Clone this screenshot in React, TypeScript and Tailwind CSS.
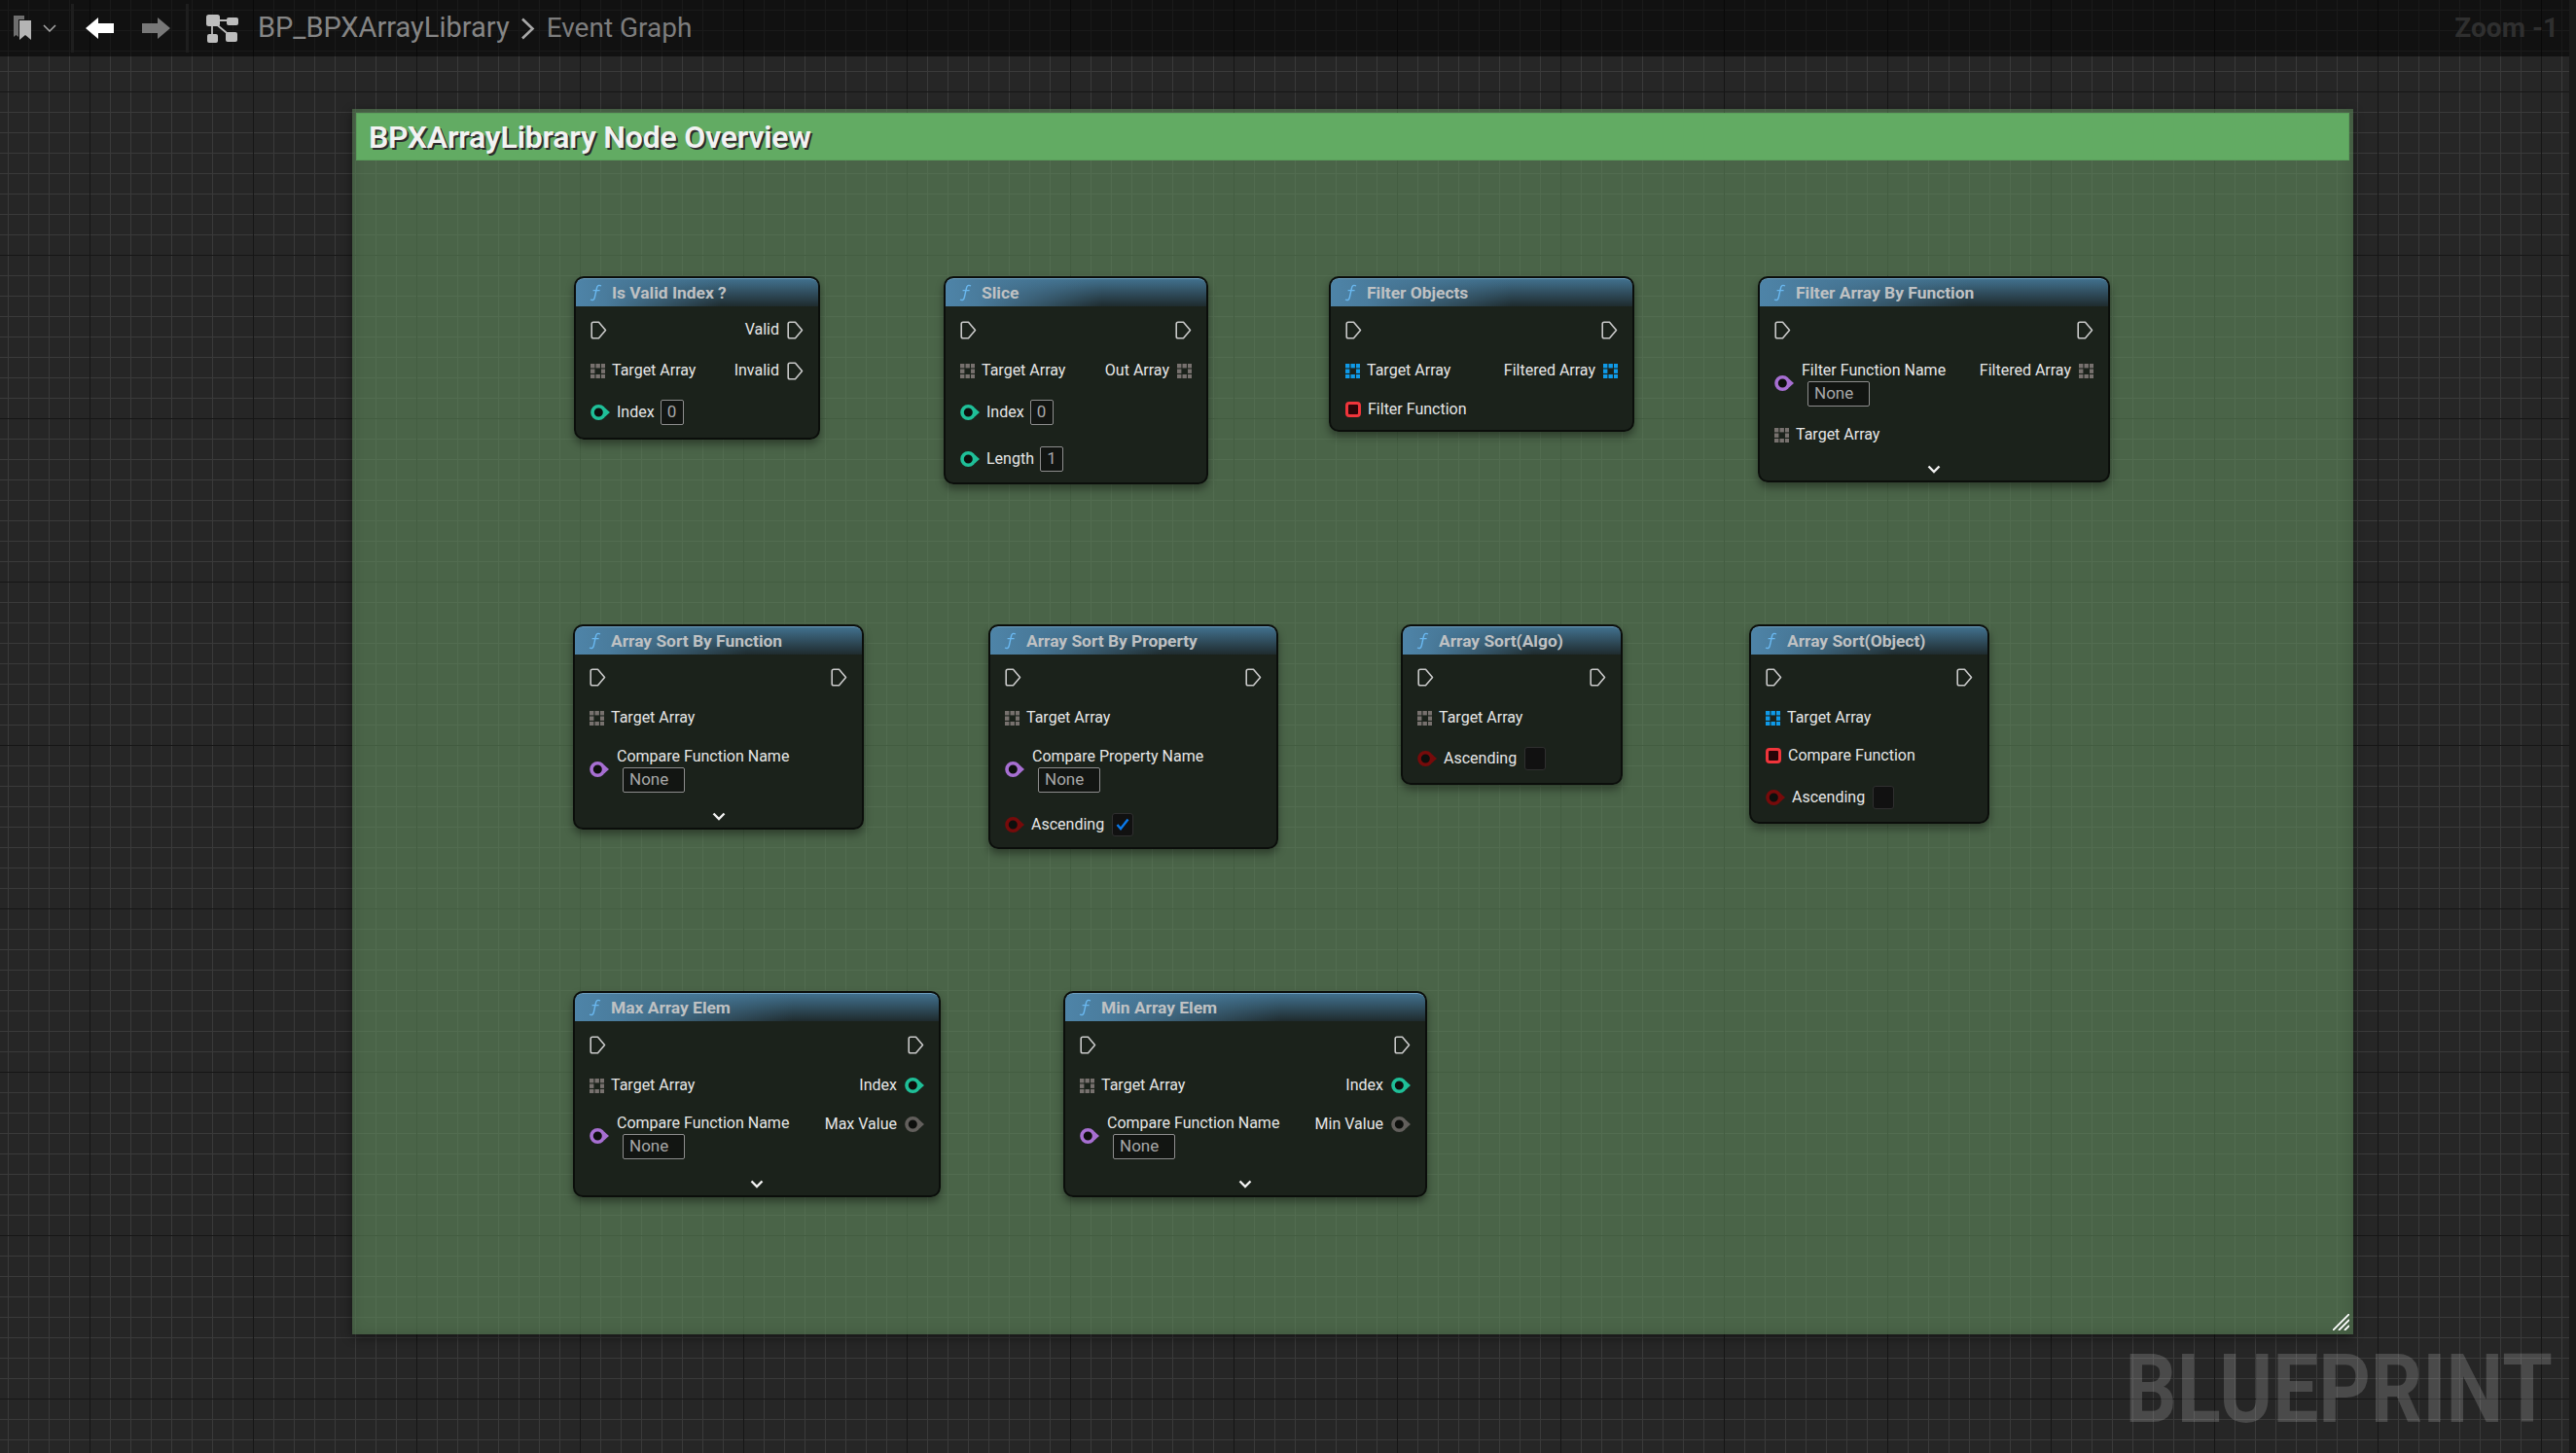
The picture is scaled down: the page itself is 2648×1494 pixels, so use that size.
import type { ReactNode } from 'react';

type PinKind = 'exec' | 'array' | 'objects' | 'delegate' | 'int' | 'name' | 'bool' | 'wild';

function ExecPin() {
  return (
    <svg width="17" height="19" viewBox="0 0 17 19" fill="none" className="shrink-0">
      <path d="M3 1.2H8.5L15.5 9.5L8.5 17.8H3Q1.2 17.8 1.2 16V3Q1.2 1.2 3 1.2Z" stroke="#c9c9c9" strokeWidth="1.6" strokeLinejoin="round" />
    </svg>
  );
}

function ArrayPin({ color }: { color: string }) {
  const cells = [0, 5.5, 11];
  return (
    <svg width="15" height="15" viewBox="0 0 15 15" className="shrink-0">
      {cells.map((y) =>
        cells.map((x) =>
          x === 5.5 && y === 5.5 ? null : <rect key={`${x}-${y}`} x={x} y={y} width="4.4" height="4.4" fill={color} />,
        ),
      )}
    </svg>
  );
}

function CirclePin({ color }: { color: string }) {
  return (
    <svg width="20" height="18" viewBox="0 0 20 18" className="shrink-0">
      <path d="M15 4.5L20 9L15 13.5Z" fill={color} />
      <circle cx="8.3" cy="9" r="6.3" fill="#0d0f0d" stroke={color} strokeWidth="3.6" />
    </svg>
  );
}

function DelegatePin() {
  return (
    <svg width="16" height="16" viewBox="0 0 16 16" className="shrink-0">
      <rect x="1.5" y="1.5" width="13" height="13" rx="2.5" fill="#2a0508" stroke="#f0353b" strokeWidth="3" />
    </svg>
  );
}

function Pin({ kind }: { kind: PinKind }) {
  if (kind === 'exec') return <ExecPin />;
  if (kind === 'array') return <ArrayPin color="#77716e" />;
  if (kind === 'objects') return <ArrayPin color="#0f9ae8" />;
  if (kind === 'delegate') return <DelegatePin />;
  if (kind === 'int') return <CirclePin color="#1fbf98" />;
  if (kind === 'name') return <CirclePin color="#a76fd2" />;
  if (kind === 'bool') return <CirclePin color="#760b0b" />;
  return <CirclePin color="#625f5c" />;
}

function InPin({ kind, label, h, children }: { kind: PinKind; label?: string; h: string; children?: ReactNode }) {
  return (
    <div className={`flex items-center ${h}`}>
      <Pin kind={kind} />
      {label && <span className="ml-[7px] text-[16px] leading-[20px] whitespace-nowrap text-[#e6e6e6]">{label}</span>}
      {children}
    </div>
  );
}

function OutPin({ kind, label, h }: { kind: PinKind; label?: string; h: string }) {
  return (
    <div className={`flex items-center justify-end ${h}`}>
      {label && <span className="mr-[8px] text-[16px] leading-[20px] whitespace-nowrap text-[#e6e6e6]">{label}</span>}
      <Pin kind={kind} />
    </div>
  );
}

function NumberBox({ value }: { value: string }) {
  return (
    <div className="ml-[6px] flex h-[26px] w-[24px] items-center justify-center rounded-[2px] border border-[#8d8d8d] bg-[#121512] text-[17px] text-[#a8a8a8]">
      {value}
    </div>
  );
}

function CheckBox({ checked }: { checked?: boolean }) {
  return (
    <div className="ml-[8px] flex h-[24px] w-[22px] items-center justify-center rounded-[3px] border border-[#2f2f2f] bg-[#111111]">
      {checked && (
        <svg width="14" height="13" viewBox="0 0 14 13" fill="none">
          <path d="M1.5 7L5 11L12.5 1.5" stroke="#0a78e8" strokeWidth="2.4" />
        </svg>
      )}
    </div>
  );
}

function NamePin({ label, h }: { label: string; h: string }) {
  return (
    <div className={`flex items-center ${h}`}>
      <Pin kind="name" />
      <div className="ml-[8px] flex flex-col">
        <span className="text-[16px] leading-[20px] whitespace-nowrap text-[#e6e6e6]">{label}</span>
        <div className="ml-[6px] mt-[1px] flex h-[26px] w-[64px] items-center rounded-[2px] border border-[#8d8d8d] bg-[#121512] pl-[6px] text-[17px] text-[#a8a8a8]">
          None
        </div>
      </div>
    </div>
  );
}

function Chevron() {
  return (
    <div className="flex h-[24px] shrink-0 items-center justify-center">
      <svg width="14" height="9" viewBox="0 0 14 9" fill="none">
        <path d="M1.5 1.5L7 7L12.5 1.5" stroke="#f2f2f2" strokeWidth="2.4" />
      </svg>
    </div>
  );
}

function FuncNode({ title, box, left, right, more }: { title: string; box: string; left: ReactNode; right: ReactNode; more?: boolean }) {
  return (
    <div className={`absolute flex flex-col overflow-hidden rounded-[10px] border-2 border-[#0b0e0b] bg-[#1a201a]/97 shadow-[0_5px_9px_rgba(0,0,0,0.38)] ${box}`}>
      <div className="flex h-[29px] shrink-0 items-center rounded-t-[8px] border-t border-[#6d9dbd] bg-[linear-gradient(to_right,#4e84a8_0%,#4a7c9d_12%,rgba(74,124,157,0)_60%),linear-gradient(to_bottom,#41708d_0%,#1f2b2e_100%)] pl-[14px]">
        <svg width="14" height="18" viewBox="0 0 14 18" fill="none" className="shrink-0">
          <path d="M12 2C9.5 0.6 8 1.5 7.4 4.5L5.4 13.5C4.8 16.4 3.2 17.2 1 16M3.6 6.6H10.6" stroke="#69b7ef" strokeWidth="1.4" />
        </svg>
        <span className="ml-[9px] text-[17.4px] font-bold whitespace-nowrap text-[#bfc1c3]">{title}</span>
      </div>
      <div className="flex flex-1 justify-between px-[15px]">
        <div className="flex flex-col">{left}</div>
        <div className="flex flex-col">{right}</div>
      </div>
      {more && <Chevron />}
    </div>
  );
}

function Toolbar() {
  return (
    <div className="relative flex h-[58px] items-center bg-black/55">
      <svg width="20" height="26" viewBox="0 0 20 26" className="ml-[14px] shrink-0">
        <path d="M0 0H11V4H5V22L2.5 20L0 22Z" fill="#6e6e6e" />
        <path d="M6 5H18V25L12 20L6 25Z" fill="#b4b4b4" />
      </svg>
      <svg width="14" height="8" viewBox="0 0 14 8" fill="none" className="ml-[10px] shrink-0">
        <path d="M1 1L7 7L13 1" stroke="#a8a8a8" strokeWidth="1.5" />
      </svg>
      <div className="ml-[15px] h-[50px] w-[3px] shrink-0 bg-[#1e1e1e]" />
      <svg width="29" height="22" viewBox="0 0 29 22" className="ml-[12px] shrink-0">
        <path d="M0 11L13 0V6H29V16H13V22Z" fill="#ffffff" />
      </svg>
      <svg width="29" height="22" viewBox="0 0 29 22" className="ml-[29px] shrink-0">
        <path d="M29 11L16 0V6H0V16H16V22Z" fill="#787878" />
      </svg>
      <div className="ml-[16px] h-[50px] w-[3px] shrink-0 bg-[#1e1e1e]" />
      <svg width="33" height="29" viewBox="0 0 33 29" className="ml-[18px] shrink-0" fill="none">
        <path d="M8 6H26M6 8V24M8 8L26 23" stroke="#b9b9b9" strokeWidth="1.8" />
        <rect x="0" y="0" width="14" height="12" rx="2.5" fill="#bdbdbd" />
        <rect x="21" y="3" width="12" height="8" rx="2" fill="#bdbdbd" />
        <rect x="1" y="20" width="11" height="9" rx="2" fill="#bdbdbd" />
        <rect x="20" y="18" width="12" height="10" rx="2" fill="#bdbdbd" />
      </svg>
      <span className="ml-[20px] text-[29px] whitespace-nowrap text-[#858585]">BP_BPXArrayLibrary</span>
      <svg width="15" height="23" viewBox="0 0 15 23" fill="none" className="ml-[11px] shrink-0">
        <path d="M2 1.5L12.5 11.5L2 21.5" stroke="#a8a8a8" strokeWidth="2.6" />
      </svg>
      <span className="ml-[12px] text-[28px] whitespace-nowrap text-[#7d7d7d]">Event Graph</span>
      <span className="ml-auto mr-[11px] text-[28px] font-bold whitespace-nowrap text-[#2f2f2f]">Zoom -1</span>
    </div>
  );
}

export default function App() {
  return (
    <div className="flex h-[1494px] w-[2648px] overflow-hidden bg-[#1a1a1a] [font-family:Roboto,sans-serif]">
      <div className="relative w-[2641px] shrink-0 bg-[#262626] bg-[linear-gradient(to_right,#161616_1px,transparent_1px),linear-gradient(to_bottom,#161616_1px,transparent_1px),linear-gradient(to_right,#3a3a3a_1px,transparent_1px),linear-gradient(to_bottom,#3a3a3a_1px,transparent_1px)] bg-[size:168px_168px,168px_168px,21px_21px,21px_21px] bg-[position:92px_94px,92px_94px,8px_10px,8px_10px]">
        <Toolbar />

        {/* comment box */}
        <div className="absolute left-[362px] top-[112px] h-[1260px] w-[2057px] bg-[rgba(98,141,95,0.6)] shadow-[0_3px_10px_rgba(0,0,0,0.45),inset_0_0_14px_rgba(0,0,0,0.14)]">
          <div className="m-[4px] flex h-[49px] items-center border border-[#5a9f5b] bg-[#62ab63] pl-[12px]">
            <span className="text-[32px] font-semibold tracking-[-0.2px] whitespace-nowrap text-[#f2f2f2] [text-shadow:2px_2px_0_#2c2c2c]">
              BPXArrayLibrary Node Overview
            </span>
          </div>
          <svg width="17" height="17" viewBox="0 0 17 17" className="absolute bottom-[4px] right-[4px]" stroke="#ffffff" strokeWidth="1.8">
            <path d="M0 17L17 0M6 17L17 6M12 17L17 12" />
          </svg>
        </div>

        <FuncNode
          title="Is Valid Index ?"
          box="left-[590px] top-[284px] h-[168px] w-[253px]"
          left={<>
            <InPin kind="exec" h="h-[48px]" />
            <InPin kind="array" label="Target Array" h="h-[36px]" />
            <InPin kind="int" label="Index" h="h-[50px]"><NumberBox value="0" /></InPin>
          </>}
          right={<>
            <OutPin kind="exec" label="Valid" h="h-[48px]" />
            <OutPin kind="exec" label="Invalid" h="h-[36px]" />
          </>}
        />
        <FuncNode
          title="Slice"
          box="left-[970px] top-[284px] h-[214px] w-[272px]"
          left={<>
            <InPin kind="exec" h="h-[48px]" />
            <InPin kind="array" label="Target Array" h="h-[36px]" />
            <InPin kind="int" label="Index" h="h-[50px]"><NumberBox value="0" /></InPin>
            <InPin kind="int" label="Length" h="h-[46px]"><NumberBox value="1" /></InPin>
          </>}
          right={<>
            <OutPin kind="exec" h="h-[48px]" />
            <OutPin kind="array" label="Out Array" h="h-[36px]" />
          </>}
        />
        <FuncNode
          title="Filter Objects"
          box="left-[1366px] top-[284px] h-[160px] w-[314px]"
          left={<>
            <InPin kind="exec" h="h-[48px]" />
            <InPin kind="objects" label="Target Array" h="h-[36px]" />
            <InPin kind="delegate" label="Filter Function" h="h-[44px]" />
          </>}
          right={<>
            <OutPin kind="exec" h="h-[48px]" />
            <OutPin kind="objects" label="Filtered Array" h="h-[36px]" />
          </>}
        />
        <FuncNode
          more
          title="Filter Array By Function"
          box="left-[1807px] top-[284px] h-[212px] w-[362px]"
          left={<>
            <InPin kind="exec" h="h-[48px]" />
            <NamePin label="Filter Function Name" h="h-[62px]" />
            <InPin kind="array" label="Target Array" h="h-[44px]" />
          </>}
          right={<>
            <OutPin kind="exec" h="h-[48px]" />
            <OutPin kind="array" label="Filtered Array" h="h-[36px]" />
          </>}
        />

        <FuncNode
          more
          title="Array Sort By Function"
          box="left-[589px] top-[642px] h-[211px] w-[299px]"
          left={<>
            <InPin kind="exec" h="h-[47px]" />
            <InPin kind="array" label="Target Array" h="h-[36px]" />
            <NamePin label="Compare Function Name" h="h-[70px]" />
          </>}
          right={<OutPin kind="exec" h="h-[47px]" />}
        />
        <FuncNode
          title="Array Sort By Property"
          box="left-[1016px] top-[642px] h-[231px] w-[298px]"
          left={<>
            <InPin kind="exec" h="h-[47px]" />
            <InPin kind="array" label="Target Array" h="h-[36px]" />
            <NamePin label="Compare Property Name" h="h-[70px]" />
            <InPin kind="bool" label="Ascending" h="h-[43px]"><CheckBox checked /></InPin>
          </>}
          right={<OutPin kind="exec" h="h-[47px]" />}
        />
        <FuncNode
          title="Array Sort(Algo)"
          box="left-[1440px] top-[642px] h-[165px] w-[228px]"
          left={<>
            <InPin kind="exec" h="h-[47px]" />
            <InPin kind="array" label="Target Array" h="h-[36px]" />
            <InPin kind="bool" label="Ascending" h="h-[47px]"><CheckBox /></InPin>
          </>}
          right={<OutPin kind="exec" h="h-[47px]" />}
        />
        <FuncNode
          title="Array Sort(Object)"
          box="left-[1798px] top-[642px] h-[205px] w-[247px]"
          left={<>
            <InPin kind="exec" h="h-[47px]" />
            <InPin kind="objects" label="Target Array" h="h-[36px]" />
            <InPin kind="delegate" label="Compare Function" h="h-[41px]" />
            <InPin kind="bool" label="Ascending" h="h-[46px]"><CheckBox /></InPin>
          </>}
          right={<OutPin kind="exec" h="h-[47px]" />}
        />

        <FuncNode
          more
          title="Max Array Elem"
          box="left-[589px] top-[1019px] h-[212px] w-[378px]"
          left={<>
            <InPin kind="exec" h="h-[48px]" />
            <InPin kind="array" label="Target Array" h="h-[36px]" />
            <NamePin label="Compare Function Name" h="h-[68px]" />
          </>}
          right={<>
            <OutPin kind="exec" h="h-[48px]" />
            <OutPin kind="int" label="Index" h="h-[36px]" />
            <OutPin kind="wild" label="Max Value" h="h-[44px]" />
          </>}
        />
        <FuncNode
          more
          title="Min Array Elem"
          box="left-[1093px] top-[1019px] h-[212px] w-[374px]"
          left={<>
            <InPin kind="exec" h="h-[48px]" />
            <InPin kind="array" label="Target Array" h="h-[36px]" />
            <NamePin label="Compare Function Name" h="h-[68px]" />
          </>}
          right={<>
            <OutPin kind="exec" h="h-[48px]" />
            <OutPin kind="int" label="Index" h="h-[36px]" />
            <OutPin kind="wild" label="Min Value" h="h-[44px]" />
          </>}
        />

        <span className="absolute bottom-[8px] right-[17px] origin-right scale-x-[0.85] text-[98px] leading-[115px] font-bold text-white/[0.17]">
          BLUEPRINT
        </span>
      </div>
    </div>
  );
}
